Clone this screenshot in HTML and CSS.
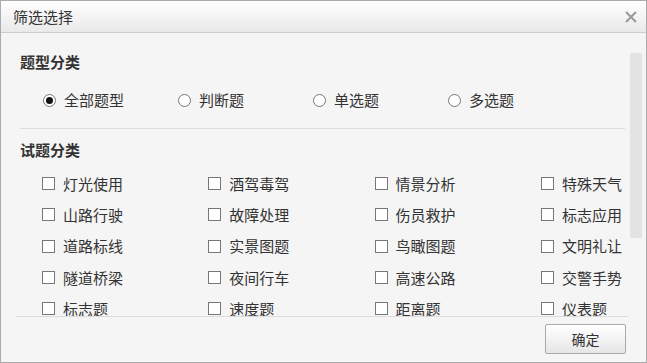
FILE: index.html
```html
<!DOCTYPE html>
<html>
<head>
  <title>筛选选择</title>
  <link rel="stylesheet" href="styles.css">
</head>
<body>
  <div class="dialog">
    <div class="dialog-header">
      <span class="dialog-title">筛选选择</span>
      <span class="dialog-close">
        <svg width="12" height="12" viewBox="0 0 12 12"><path d="M1 1 L11 11 M11 1 L1 11" stroke="#9a9a9a" stroke-width="2" fill="none"/></svg>
      </span>
    </div>

    <div class="dialog-main">
      <div class="dialog-content">
        <h3 class="section-title">题型分类</h3>
        <div class="radio-group">
          <label class="radio-item"><span class="radio checked"></span>全部题型</label>
          <label class="radio-item"><span class="radio"></span>判断题</label>
          <label class="radio-item"><span class="radio"></span>单选题</label>
          <label class="radio-item"><span class="radio"></span>多选题</label>
        </div>

        <div class="divider"></div>

        <h3 class="section-title">试题分类</h3>
        <div class="check-grid">
          <label class="check-item"><span class="checkbox"></span>灯光使用</label>
          <label class="check-item"><span class="checkbox"></span>酒驾毒驾</label>
          <label class="check-item"><span class="checkbox"></span>情景分析</label>
          <label class="check-item"><span class="checkbox"></span>特殊天气</label>
          <label class="check-item"><span class="checkbox"></span>山路行驶</label>
          <label class="check-item"><span class="checkbox"></span>故障处理</label>
          <label class="check-item"><span class="checkbox"></span>伤员救护</label>
          <label class="check-item"><span class="checkbox"></span>标志应用</label>
          <label class="check-item"><span class="checkbox"></span>道路标线</label>
          <label class="check-item"><span class="checkbox"></span>实景图题</label>
          <label class="check-item"><span class="checkbox"></span>鸟瞰图题</label>
          <label class="check-item"><span class="checkbox"></span>文明礼让</label>
          <label class="check-item"><span class="checkbox"></span>隧道桥梁</label>
          <label class="check-item"><span class="checkbox"></span>夜间行车</label>
          <label class="check-item"><span class="checkbox"></span>高速公路</label>
          <label class="check-item"><span class="checkbox"></span>交警手势</label>
          <label class="check-item"><span class="checkbox"></span>标志题</label>
          <label class="check-item"><span class="checkbox"></span>速度题</label>
          <label class="check-item"><span class="checkbox"></span>距离题</label>
          <label class="check-item"><span class="checkbox"></span>仪表题</label>
          <label class="check-item"><span class="checkbox"></span>其他</label>
        </div>
      </div>
      <div class="scrollbar"><div class="scroll-thumb"></div></div>
    </div>

    <div class="dialog-footer">
      <button class="ok-button">确定</button>
    </div>
  </div>
</body>
</html>
```

FILE: styles.css
```css
body {
  margin: 0;
  font-family: "Noto Sans CJK SC", "Noto Sans", sans-serif;
  color: #333;
  background-color: #f5f5f5;
}

.dialog {
  width: 647px;
  height: 363px;
  box-sizing: border-box;
  border: 1px solid #ababab;
  background-color: #f5f5f5;
  display: flex;
  flex-direction: column;
  overflow: hidden;
}

.dialog-header {
  height: 31px;
  flex-shrink: 0;
  border-bottom: 1px solid #cdcdcd;
  background: linear-gradient(#ffffff, #e9e9e9);
  display: flex;
  align-items: center;
  justify-content: space-between;
  padding: 0 9px 0 12px;
}

.dialog-title {
  font-size: 15px;
  line-height: 20px;
  color: #333;
}

.dialog-close {
  display: flex;
}

.dialog-main {
  height: 283px;
  flex-shrink: 0;
  display: flex;
  overflow: hidden;
}

.dialog-content {
  flex: 1;
  padding: 19px 5px 0 19px;
  overflow: hidden;
}

.section-title {
  margin: 0;
  font-size: 15px;
  line-height: 20px;
  font-weight: bold;
  color: #333;
}

.radio-group {
  display: flex;
  margin: 18px 0 0 23px;
  height: 20px;
}

.radio-item,
.check-item {
  display: flex;
  align-items: center;
  font-size: 15px;
  line-height: 20px;
  color: #333;
  white-space: nowrap;
}

.radio-item {
  width: 135px;
  flex-shrink: 0;
}

.radio {
  width: 11px;
  height: 11px;
  border: 1px solid #777;
  border-radius: 50%;
  background-color: #fff;
  margin-right: 8px;
  display: flex;
  align-items: center;
  justify-content: center;
}

.radio.checked::after {
  content: "";
  width: 7px;
  height: 7px;
  border-radius: 50%;
  background-color: #111;
}

.divider {
  height: 1px;
  background-color: #dcdcdc;
  margin: 18px 0 11px;
}

.check-grid {
  display: grid;
  grid-template-columns: repeat(4, 166.3px);
  grid-auto-rows: 31.3px;
  margin: 8px 0 0 22px;
}

.checkbox {
  width: 11px;
  height: 11px;
  border: 1px solid #777;
  background-color: #fff;
  margin-right: 8px;
  flex-shrink: 0;
}

.scrollbar {
  width: 16px;
  flex-shrink: 0;
}

.scroll-thumb {
  width: 12px;
  height: 185px;
  margin-top: 20px;
  background-color: #e3e3e3;
}

.dialog-footer {
  flex: 1;
  margin: 0 18px 0 15px;
  border-top: 1px solid #dcdcdc;
  display: flex;
  justify-content: flex-end;
  align-items: flex-start;
  padding: 7px 2px 0 0;
}

.ok-button {
  width: 81px;
  height: 30px;
  border: 1px solid #aaa;
  border-radius: 2px;
  background: linear-gradient(#ffffff, #e6e6e6);
  font-family: "Noto Sans CJK SC", sans-serif;
  font-size: 14px;
  color: #333;
  padding: 0;
  cursor: pointer;
}
```
